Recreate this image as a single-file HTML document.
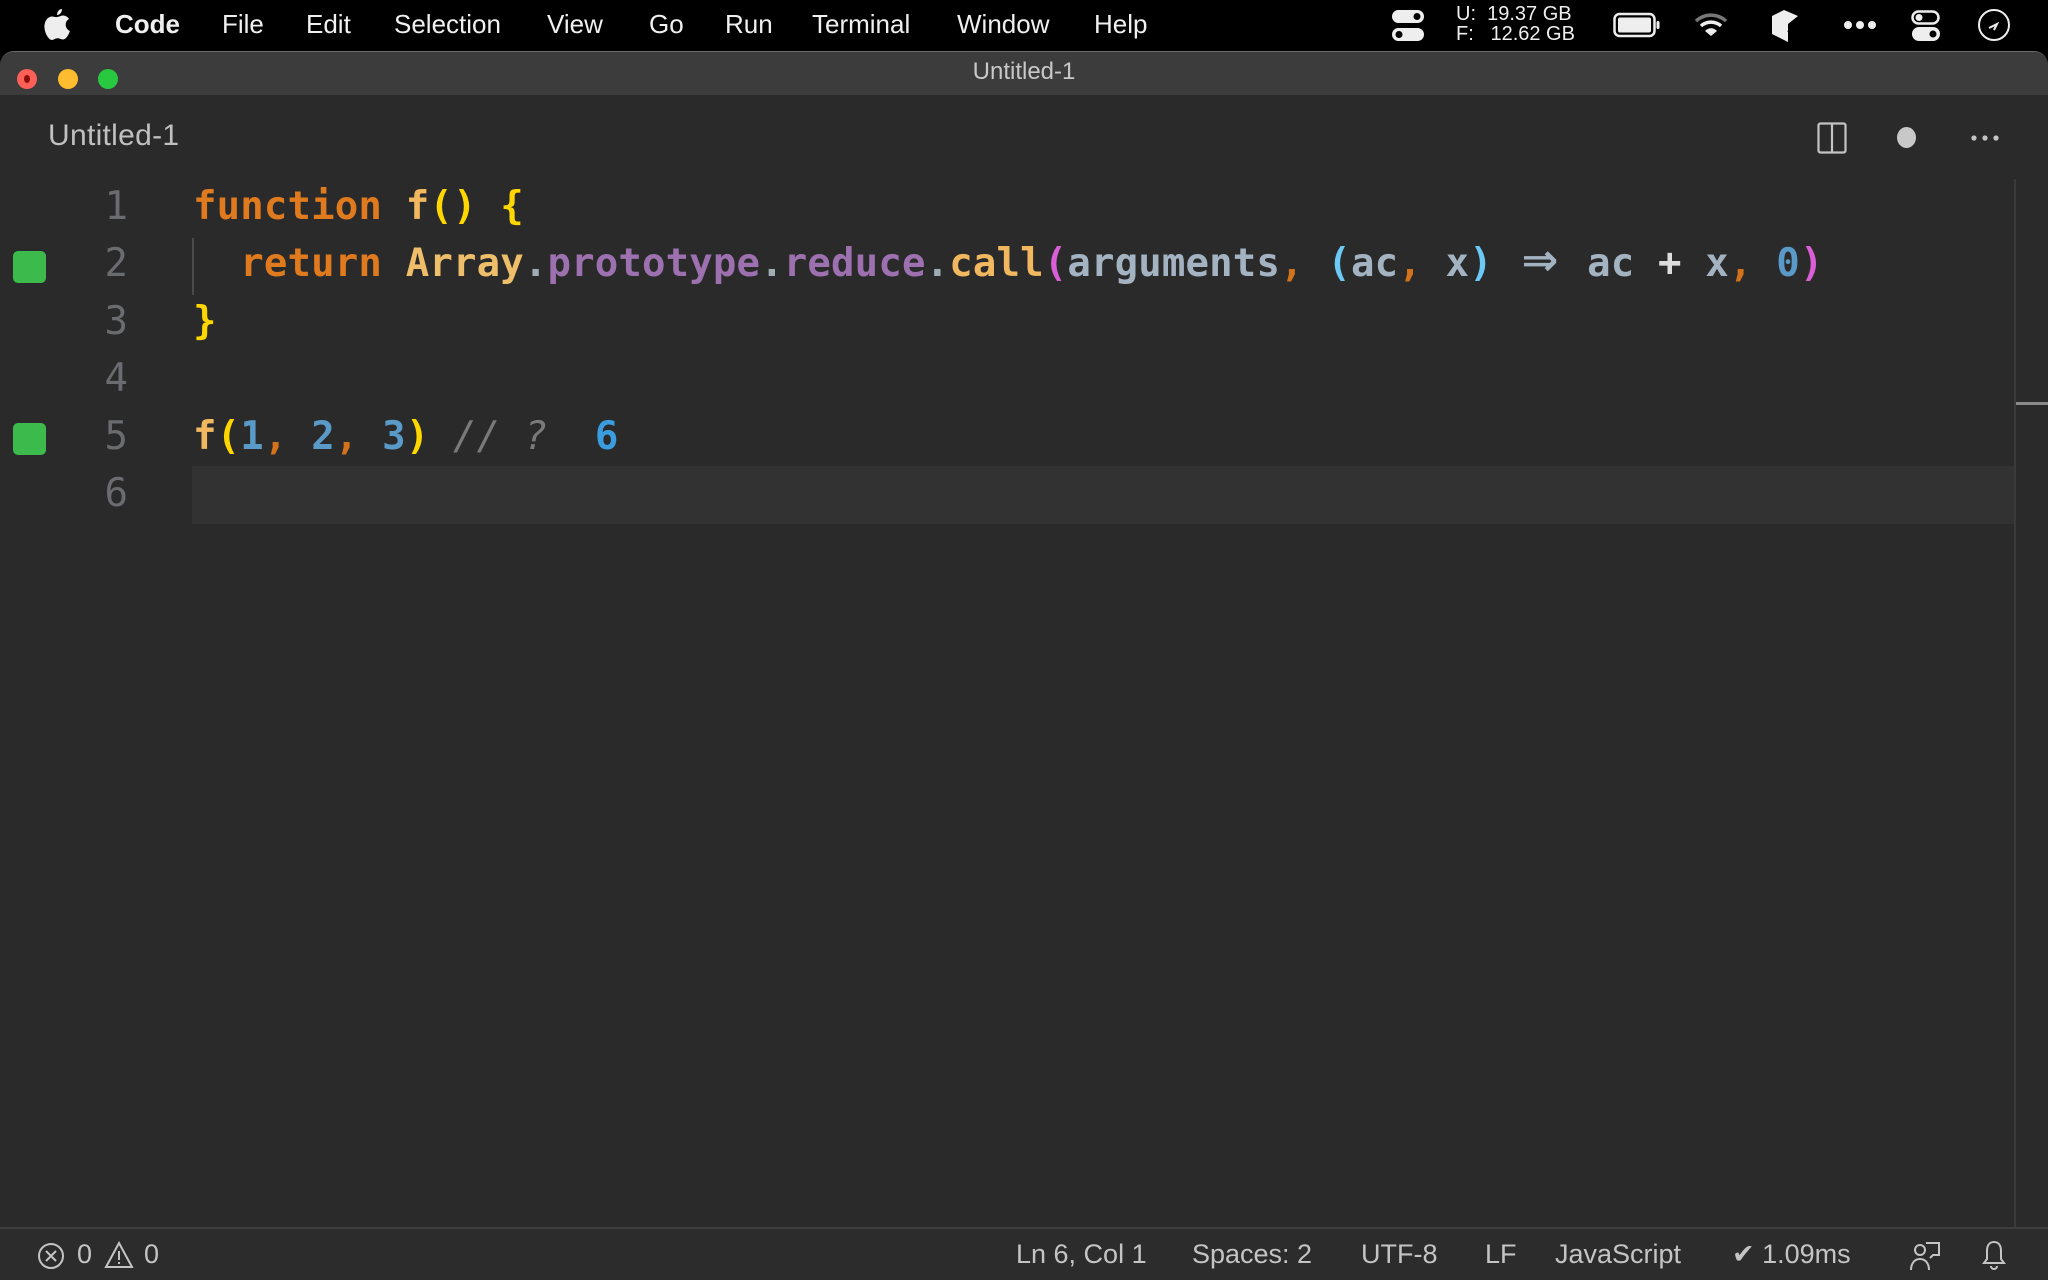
<!DOCTYPE html>
<html><head><meta charset="utf-8"><style>
*{margin:0;padding:0;box-sizing:border-box}
body{width:2048px;height:1280px;background:#000;overflow:hidden;font-family:"Liberation Sans",sans-serif;position:relative}
.menu{position:absolute;top:0;left:0;width:2048px;height:50px;background:#000;color:#f0f0f0;font-size:26px}
.menu span{position:absolute;top:9px}
.win{position:absolute;top:51px;left:0;width:2048px;height:1229px;background:#2a2a2a;border-radius:14px 14px 0 0;overflow:hidden;border-top:1px solid #6a6a6a}
.title{position:absolute;top:0;left:0;width:100%;height:43px;background:#3c3c3c;color:#c8c8c8;font-size:24px;text-align:center;line-height:40px}
.tl{position:absolute;top:17px;width:20px;height:20px;border-radius:50%}
.tab{position:absolute;left:48px;top:67px;color:#c0c0c0;font-size:30px;letter-spacing:0.3px}
.code{position:absolute;left:0;top:4px;font-family:"DejaVu Sans Mono","Liberation Mono",monospace;font-size:39px;font-weight:bold}
.ln{position:absolute;right:0;width:128px;text-align:right;color:#6a6c6f;font-weight:normal}
.line{position:absolute;left:193px;white-space:pre;letter-spacing:0.15px}
.gs{position:absolute;left:13px;width:33px;height:32px;background:#3cba4c;border-radius:5px}
.status{position:absolute;left:0;top:1175px;width:100%;height:54px;background:#2c2c2c;border-top:2px solid #3e3e3e;color:#c4c4c4;font-size:27px}
.status span{position:absolute;top:10px}
</style></head><body>
<div class="menu">
<svg style="position:absolute;left:44px;top:8px" width="26" height="32" viewBox="0 0 26 32"><path d="M18 1c0 3-2 6-5 6 0-3 2-6 5-6zM13 9c2 0 4-1.5 6-1.5 2 0 4.5 1 6 3.5-5 3-4 10 1 12-1.5 4-4 8.5-7 8.5-2 0-3-1.2-5.5-1.2S10 32 8 32c-3 0-7-6-7.5-12C0 13 4 8.5 8 8.5c2 0 3.5 1 5 .5z" fill="#eee"/></svg>
<span style="left:115px;font-weight:bold">Code</span>
<span style="left:222px">File</span><span style="left:306px">Edit</span><span style="left:394px">Selection</span><span style="left:547px">View</span><span style="left:649px">Go</span><span style="left:725px">Run</span><span style="left:812px">Terminal</span><span style="left:957px">Window</span><span style="left:1094px">Help</span>
<svg style="position:absolute;left:1391px;top:9px" width="34" height="34"><rect x="1" y="1" width="32" height="13" rx="6.5" fill="#eee"/><circle cx="26" cy="7.5" r="3.5" fill="#000"/><rect x="1" y="19" width="32" height="13" rx="6.5" fill="#eee"/><circle cx="8" cy="25.5" r="3.5" fill="#000"/></svg>
<div style="position:absolute;left:1456px;top:4px;font-size:20px;line-height:20px;color:#eee">U:&nbsp;&nbsp;19.37 GB<br>F:&nbsp;&nbsp;&nbsp;12.62 GB</div>
<svg style="position:absolute;left:1613px;top:12px" width="48" height="26"><rect x="1.5" y="2" width="40" height="22" rx="5" fill="none" stroke="#eee" stroke-width="2.5"/><rect x="5" y="5.5" width="33" height="15" rx="2" fill="#eee"/><rect x="43.5" y="9" width="3" height="8" rx="1.5" fill="#eee"/></svg>
<svg style="position:absolute;left:1694px;top:12px" width="34" height="26" viewBox="0 0 34 26"><path d="M2 9a22 22 0 0 1 30 0" fill="none" stroke="#777" stroke-width="3.5"/><path d="M7 14a15 15 0 0 1 20 0" fill="none" stroke="#eee" stroke-width="3.5"/><path d="M17 24l-6-5a8 8 0 0 1 12 0z" fill="#eee"/></svg>
<svg style="position:absolute;left:1770px;top:8px" width="30" height="36"><path d="M2 8L14 2l14 6-10 8v18L2 26z" fill="#eee"/><path d="M18 24l4-4" stroke="#000" stroke-width="2"/></svg>
<svg style="position:absolute;left:1843px;top:20px" width="34" height="10"><circle cx="5" cy="5" r="4" fill="#eee"/><circle cx="17" cy="5" r="4" fill="#eee"/><circle cx="29" cy="5" r="4" fill="#eee"/></svg>
<svg style="position:absolute;left:1911px;top:10px" width="30" height="32"><rect x="1.5" y="1.5" width="26" height="12" rx="6" fill="none" stroke="#eee" stroke-width="2.5"/><circle cx="8" cy="7.5" r="3.5" fill="#eee"/><rect x="1" y="17" width="28" height="14" rx="7" fill="#eee"/><circle cx="22" cy="24" r="3.5" fill="#000"/></svg>
<svg style="position:absolute;left:1977px;top:8px" width="34" height="34"><circle cx="17" cy="17" r="15" fill="none" stroke="#eee" stroke-width="2"/><path d="M12 20l8-4-3 6" fill="none" stroke="#eee" stroke-width="2"/></svg>
</div>
<div class="win">
<div class="title">Untitled-1</div>
<div class="tl" style="left:17px;background:#fe5f57"><div style="position:absolute;left:7px;top:6px;width:6px;height:8px;border-radius:50%;background:#8a0f0a"></div></div>
<div class="tl" style="left:58px;background:#febc2e"></div>
<div class="tl" style="left:98px;background:#28c840"></div>
<div class="tab">Untitled-1</div>
<svg style="position:absolute;left:1817px;top:70px" width="30" height="32"><rect x="1.5" y="1.5" width="27" height="29" rx="2" fill="none" stroke="#c4c4c4" stroke-width="2.2"/><line x1="15" y1="2" x2="15" y2="30" stroke="#c4c4c4" stroke-width="2.2"/></svg>
<div style="position:absolute;left:1897px;top:75px;width:19px;height:21px;border-radius:50%;background:#c8c8c8"></div>
<svg style="position:absolute;left:1970px;top:82px" width="30" height="8"><circle cx="4" cy="4" r="2.6" fill="#c4c4c4"/><circle cx="15" cy="4" r="2.6" fill="#c4c4c4"/><circle cx="26" cy="4" r="2.6" fill="#c4c4c4"/></svg>
<div style="position:absolute;left:2014px;top:127px;width:2px;height:1050px;background:#3a3a3a"></div>
<div style="position:absolute;left:2016px;top:350px;width:32px;height:3px;background:#8a8a8a"></div>
<div style="position:absolute;left:192px;top:414px;width:1822px;height:58px;background:#323232"></div>
<div style="position:absolute;left:192px;top:186px;width:2px;height:57px;background:#4a4a4a"></div>
<div class="gs" style="top:199px"></div>
<div class="gs" style="top:371px"></div>
<div class="code">
<div class="ln" style="top:128px;left:0">1</div>
<div class="ln" style="top:185px;left:0">2</div>
<div class="ln" style="top:243px;left:0">3</div>
<div class="ln" style="top:300px;left:0">4</div>
<div class="ln" style="top:358px;left:0">5</div>
<div class="ln" style="top:415px;left:0">6</div>
<div class="line" style="top:128px"><span style="color:#e07a1e">function</span> <span style="color:#f2b860">f</span><span style="color:#ffd700">()</span> <span style="color:#ffd700">{</span></div>
<div class="line" style="top:185px">  <span style="color:#e07a1e">return</span> <span style="color:#efbe6a">Array</span><span style="color:#a0acb4">.</span><span style="color:#9d71b0">prototype</span><span style="color:#a0acb4">.</span><span style="color:#9d71b0">reduce</span><span style="color:#a0acb4">.</span><span style="color:#f2b860">call</span><span style="color:#da5fd6">(</span><span style="color:#a3b3c2">arguments</span><span style="color:#d2731b">,</span> <span style="color:#6cc8f5">(</span><span style="color:#a3b3c2">ac</span><span style="color:#d2731b">,</span> <span style="color:#a3b3c2">x</span><span style="color:#6cc8f5">)</span> <span style="color:#a3b3c2;display:inline-block;width:47px;letter-spacing:0;text-align:center;font-family:'DejaVu Sans',sans-serif;font-size:44px;line-height:39px;vertical-align:top;overflow:visible">⇒</span> <span style="color:#a3b3c2">ac</span> <span style="color:#dcdcdc">+</span> <span style="color:#a3b3c2">x</span><span style="color:#d2731b">,</span> <span style="color:#5a9ac8">0</span><span style="color:#da5fd6">)</span></div>
<div class="line" style="top:243px"><span style="color:#ffd700">}</span></div>
<div class="line" style="top:358px"><span style="color:#f2b860">f</span><span style="color:#ffd700">(</span><span style="color:#5a9ac8">1</span><span style="color:#d2731b">,</span> <span style="color:#5a9ac8">2</span><span style="color:#d2731b">,</span> <span style="color:#5a9ac8">3</span><span style="color:#ffd700">)</span> <span style="color:#7a7a7a;font-style:italic;font-weight:normal">// ?</span>  <span style="color:#3a9de0">6</span></div>
</div>
<div class="status">
<svg style="position:absolute;left:37px;top:13px" width="28" height="28"><circle cx="14" cy="14" r="12" fill="none" stroke="#c4c4c4" stroke-width="2"/><path d="M9 9l10 10M19 9L9 19" stroke="#c4c4c4" stroke-width="2"/></svg>
<span style="left:77px">0</span>
<svg style="position:absolute;left:104px;top:12px" width="30" height="28"><path d="M15 2L28 26H2z" fill="none" stroke="#c4c4c4" stroke-width="2"/><path d="M15 10v9M15 21v2" stroke="#c4c4c4" stroke-width="2"/></svg>
<span style="left:144px">0</span>
<span style="left:1016px">Ln 6, Col 1</span>
<span style="left:1192px">Spaces: 2</span>
<span style="left:1361px">UTF-8</span>
<span style="left:1485px">LF</span>
<span style="left:1555px">JavaScript</span>
<span style="left:1732px">✔ 1.09ms</span>
<svg style="position:absolute;left:1908px;top:11px" width="34" height="32"><circle cx="12" cy="10" r="5" fill="none" stroke="#c4c4c4" stroke-width="2"/><path d="M3 30c0-7 4-11 9-11s9 4 9 11M18 3h13v12h-6l-3 3" fill="none" stroke="#c4c4c4" stroke-width="2"/></svg>
<svg style="position:absolute;left:1981px;top:10px" width="26" height="32"><path d="M13 3c-5 0-7 4-7 9v8l-3 4h20l-3-4v-8c0-5-2-9-7-9zM10 27a3 3 0 0 0 6 0" fill="none" stroke="#c4c4c4" stroke-width="2"/></svg>
</div>
</div>
</body></html>
